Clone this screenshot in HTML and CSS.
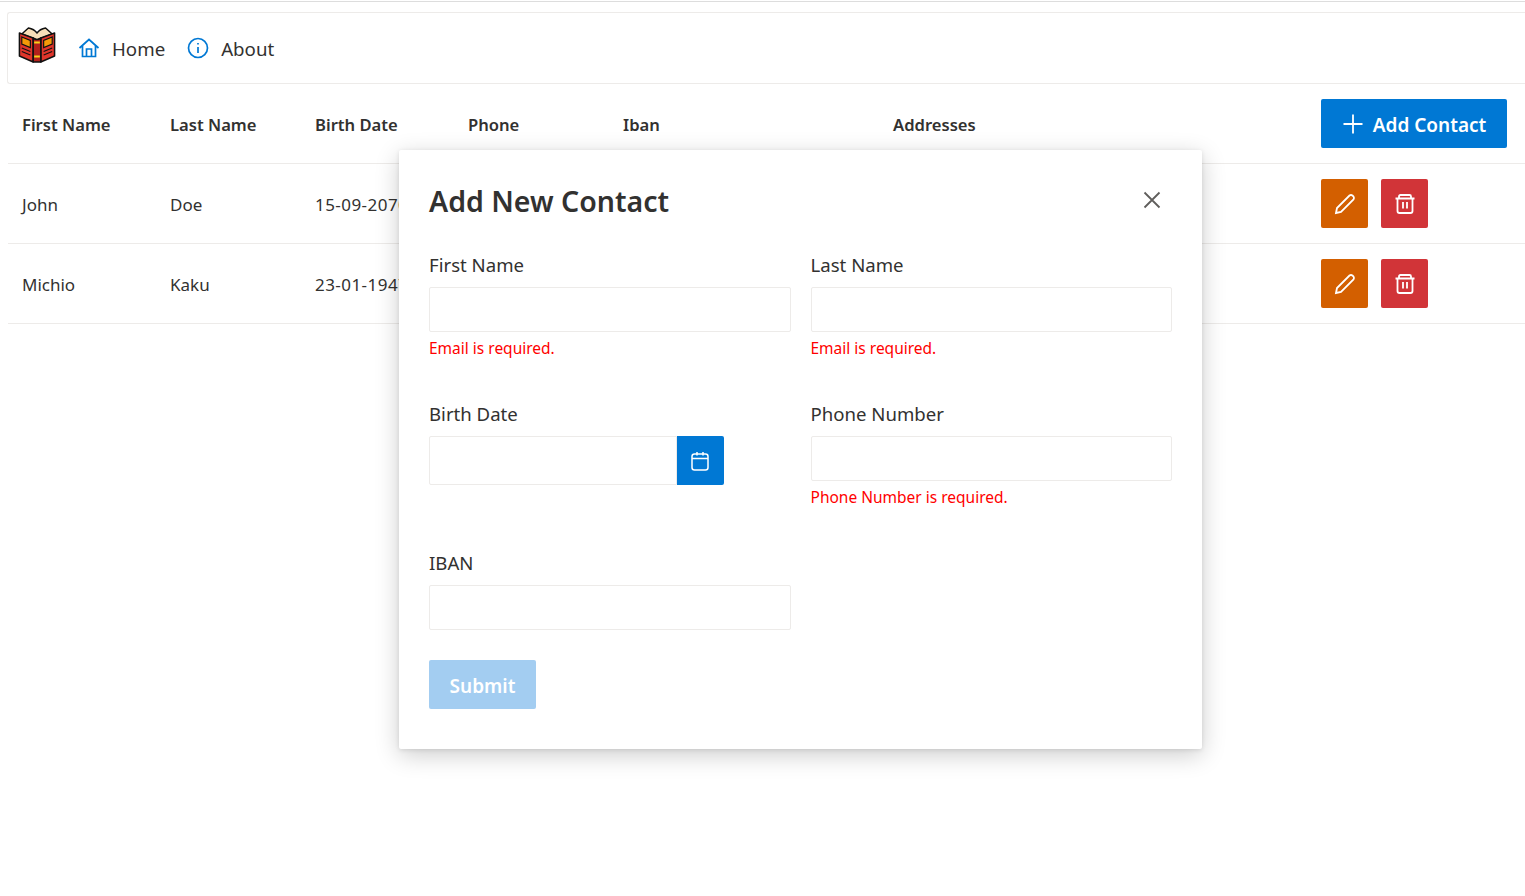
FILE: index.html
```html
<!DOCTYPE html>
<html lang="en">
<head>
  <meta charset="UTF-8">
  <meta name="viewport" content="width=device-width, initial-scale=1.0">
  <title>Contacts</title>
  <link rel="stylesheet" href="styles.css">
</head>
<body>
  <div class="topline"></div>

  <nav class="navbar">
    <svg class="logo" viewBox="0 3 40 36" width="38" height="36" preserveAspectRatio="none">
      <path d="M4 10 L11 4 Q17 5 20 9 Q23 5 29 4 L36 10 L20 16 Z" fill="#f8dfb8" stroke="#111" stroke-width="1.6" stroke-linejoin="round"/>
      <path d="M1.500 9 L16 14 V38 L1.500 32 Z" fill="#e0352b" stroke="#111" stroke-width="1.6" stroke-linejoin="round"/>
      <path d="M38.500 9 L24 14 V38 L38.500 32 Z" fill="#e0352b" stroke="#111" stroke-width="1.6" stroke-linejoin="round"/>
      <path d="M16 14 Q20 17 24 14 V38 H16 Z" fill="#b3201c" stroke="#111" stroke-width="1.6" stroke-linejoin="round"/>
      <path d="M4 13 L13 16.500 V23.500 L4 20 Z" fill="#f59a08" stroke="#111" stroke-width="1.2"/>
      <path d="M36 13 L27 16.500 V23.500 L36 20 Z" fill="#f59a08" stroke="#111" stroke-width="1.2"/>
      <path d="M4 24 L13 27.500 M4 27.500 L13 31 M36 24 L27 27.500 M36 27.500 L27 31" stroke="#111" stroke-width="1.1"/>
      <path d="M17 18.500 H23 M17 32.500 H23" stroke="#f7d21a" stroke-width="2"/>
    </svg>
    <a class="nav-link" href="#">
      <svg class="nav-icon" viewBox="0 0 22 22"><path d="M1.500 11 L11 2.500 L20.500 11 M4.500 9 V19.500 H17.500 V9 M8.500 19.500 V12 H13.500 V19.500"/></svg>
      <span>Home</span>
    </a>
    <a class="nav-link" href="#">
      <svg class="nav-icon" viewBox="0 0 22 22"><circle cx="11" cy="11" r="9.500"/><path d="M11 10 V16 M11 6 V7.500"/></svg>
      <span>About</span>
    </a>
  </nav>

  <table class="contacts">
    <colgroup>
      <col class="col-first"><col class="col-last"><col class="col-birth"><col class="col-phone"><col class="col-iban"><col class="col-addr"><col class="col-actions">
    </colgroup>
    <thead>
      <tr>
        <th>First Name</th>
        <th>Last Name</th>
        <th>Birth Date</th>
        <th>Phone</th>
        <th>Iban</th>
        <th>Addresses</th>
        <th class="cell-actions">
          <button class="btn btn-add" type="button">
            <svg viewBox="0 0 22 22" width="22" height="22"><path d="M11 1.500 V20.500 M1.500 11 H20.500"/></svg>
            <span class="nudge">Add Contact</span>
          </button>
        </th>
      </tr>
    </thead>
    <tbody>
      <tr>
        <td>John</td>
        <td>Doe</td>
        <td class="date">15-09-2070</td>
        <td></td>
        <td></td>
        <td></td>
        <td class="cell-actions">
          <div class="actions">
            <button class="btn btn-icon btn-edit" type="button"><svg viewBox="0 0 22 22" width="22" height="22"><path d="M2 20 L3 15 L15.500 2.500 Q17 1.500 18.500 2.500 L19.500 3.500 Q20.500 5 19.500 6.500 L7 19 Z"/></svg></button>
            <button class="btn btn-icon btn-delete" type="button"><svg viewBox="0 0 22 22" width="22" height="22"><path d="M1.500 5.500 H20.500 M5 5.500 V3.500 Q5 2 6.500 2 H15.500 Q17 2 17 3.500 V5.500 M3.500 5.500 V18 Q3.500 20 5.500 20 H16.500 Q18.500 20 18.500 18 V5.500 M9 9 V15.500 M13 9 V15.500"/></svg></button>
          </div>
        </td>
      </tr>
      <tr>
        <td>Michio</td>
        <td>Kaku</td>
        <td class="date">23-01-1947</td>
        <td></td>
        <td></td>
        <td></td>
        <td class="cell-actions">
          <div class="actions">
            <button class="btn btn-icon btn-edit" type="button"><svg viewBox="0 0 22 22" width="22" height="22"><path d="M2 20 L3 15 L15.500 2.500 Q17 1.500 18.500 2.500 L19.500 3.500 Q20.500 5 19.500 6.500 L7 19 Z"/></svg></button>
            <button class="btn btn-icon btn-delete" type="button"><svg viewBox="0 0 22 22" width="22" height="22"><path d="M1.500 5.500 H20.500 M5 5.500 V3.500 Q5 2 6.500 2 H15.500 Q17 2 17 3.500 V5.500 M3.500 5.500 V18 Q3.500 20 5.500 20 H16.500 Q18.500 20 18.500 18 V5.500 M9 9 V15.500 M13 9 V15.500"/></svg></button>
          </div>
        </td>
      </tr>
    </tbody>
  </table>

  <div class="modal">
    <div class="modal-header">
      <h2>Add New Contact</h2>
      <svg class="modal-close" viewBox="0 0 18 18" width="18" height="18"><path d="M1.500 1.500 L16.500 16.500 M16.500 1.500 L1.500 16.500"/></svg>
    </div>
    <form class="contact-form">
      <div class="field">
        <label for="firstName">First Name</label>
        <input id="firstName" type="text">
        <small class="error">Email is required.</small>
      </div>
      <div class="field">
        <label for="lastName">Last Name</label>
        <input id="lastName" type="text">
        <small class="error">Email is required.</small>
      </div>
      <div class="field">
        <label for="birthDate">Birth Date</label>
        <div class="date-group">
          <input id="birthDate" type="text">
          <button class="btn btn-date" type="button"><svg viewBox="0 0 18 20" width="18" height="20"><rect x="1" y="3" width="16" height="16" rx="2.500"/><path d="M1 7.500 H17 M6 1 V4.500 M12 1 V4.500"/></svg></button>
        </div>
      </div>
      <div class="field">
        <label for="phone">Phone Number</label>
        <input id="phone" type="text">
        <small class="error">Phone Number is required.</small>
      </div>
      <div class="field field-last">
        <label for="iban">IBAN</label>
        <input id="iban" type="text">
      </div>
    </form>
    <button class="btn btn-submit" type="button"><span class="nudge">Submit</span></button>
  </div>
</body>
</html>
```

FILE: styles.css
```css
body {
  font-family: "Noto Sans", "Open Sans", sans-serif;
  margin: 0;
  color: #323130;
  background: #fff;
  height: 896px;
  overflow: hidden;
  position: relative;
}

.topline {
  height: 1px;
  margin-top: 1px;
  background: #ddd;
}

.navbar {
  display: flex;
  align-items: center;
  height: 70px;
  margin: 10px 0 0 7px;
  padding-left: 10px;
  border: 1px solid #edebe9;
  border-right: none;
  border-radius: 3px 0 0 3px;
}

.logo {
  margin-right: 22px;
  margin-top: -6px;
}

.nudge {
  margin-top: 2px;
}

.nav-link {
  display: flex;
  align-items: center;
  gap: 12px;
  margin-right: 22px;
  font-size: 18.7px;
  color: #323130;
  text-decoration: none;
}

.nav-icon {
  width: 22px;
  height: 22px;
  fill: none;
  stroke: #0078d4;
  stroke-width: 1.7;
}

.contacts {
  table-layout: fixed;
  border-collapse: collapse;
  width: 1517px;
  margin-left: 8px;
}

.col-first { width: 148px; }
.col-last { width: 145px; }
.col-birth { width: 153px; }
.col-phone { width: 155px; }
.col-iban { width: 270px; }
.col-addr { width: 428px; }

th, td {
  padding: 2px 14px 0;
  text-align: left;
  border-bottom: 1px solid #edebe9;
  white-space: nowrap;
}

th {
  height: 77px;
  font-size: 16.6px;
  font-weight: 600;
}

td {
  height: 77px;
  font-size: 17px;
}

.date {
  letter-spacing: 0.45px;
}

th.cell-actions, td.cell-actions {
  padding-top: 0;
  height: 79px;
}

.btn {
  display: inline-flex;
  align-items: center;
  justify-content: center;
  border: none;
  border-radius: 2px;
  color: #fff;
  font-family: inherit;
  font-size: 19px;
  font-weight: 600;
  height: 49px;
  padding: 0;
}

.btn svg {
  fill: none;
  stroke: #fff;
  stroke-width: 1.8;
}

.btn-add {
  width: 186px;
  gap: 9px;
  background: #0078d4;
}

.actions {
  display: flex;
  gap: 13px;
}

.btn-icon {
  width: 47px;
}

.btn-edit { background: #d35f00; }
.btn-delete { background: #d13438; }

.modal {
  position: absolute;
  left: 399px;
  top: 150px;
  width: 743px;
  padding: 30px 30px 40px;
  background: #fff;
  border-radius: 2px;
  box-shadow: 0 6px 24px rgba(0, 0, 0, 0.2), 0 1px 4px rgba(0, 0, 0, 0.1);
}

.modal-header {
  display: flex;
  justify-content: space-between;
  align-items: center;
  height: 44px;
  margin-bottom: 28px;
}

.modal-header h2 {
  margin: -2px 0 0;
  font-size: 28.5px;
  font-weight: 600;
}

.modal-close {
  margin-right: 11px;
  margin-top: -4px;
  fill: none;
  stroke: #605e5c;
  stroke-width: 1.8;
}

.contact-form {
  display: grid;
  grid-template-columns: 1fr 1fr;
  grid-auto-rows: 149px;
  column-gap: 20px;
}

.field {
  display: flex;
  flex-direction: column;
  align-items: stretch;
}

.field-last {
  height: 80px;
}

.field label {
  font-size: 18.6px;
  line-height: 25px;
  margin-bottom: 10px;
}

.field input {
  box-sizing: border-box;
  height: 45px;
  border: 1px solid #edebe9;
  border-radius: 2px;
  outline: none;
}

.error {
  margin-top: 5px;
  font-size: 15.5px;
  line-height: 22px;
  color: #f00;
}

.date-group {
  display: flex;
  width: 295px;
}

.date-group input {
  flex: 1;
  min-width: 0;
  height: 49px;
  border-radius: 2px 0 0 2px;
}

.btn-date {
  width: 47px;
  flex: none;
  background: #0078d4;
  border-radius: 0 2px 2px 0;
}

.btn-date svg {
  margin-right: 1px;
  stroke-width: 1.5;
}

.btn-submit {
  width: 107px;
  margin-top: -39px;
  position: relative;
  background: #a3cdf1;
  display: flex;
}
```
